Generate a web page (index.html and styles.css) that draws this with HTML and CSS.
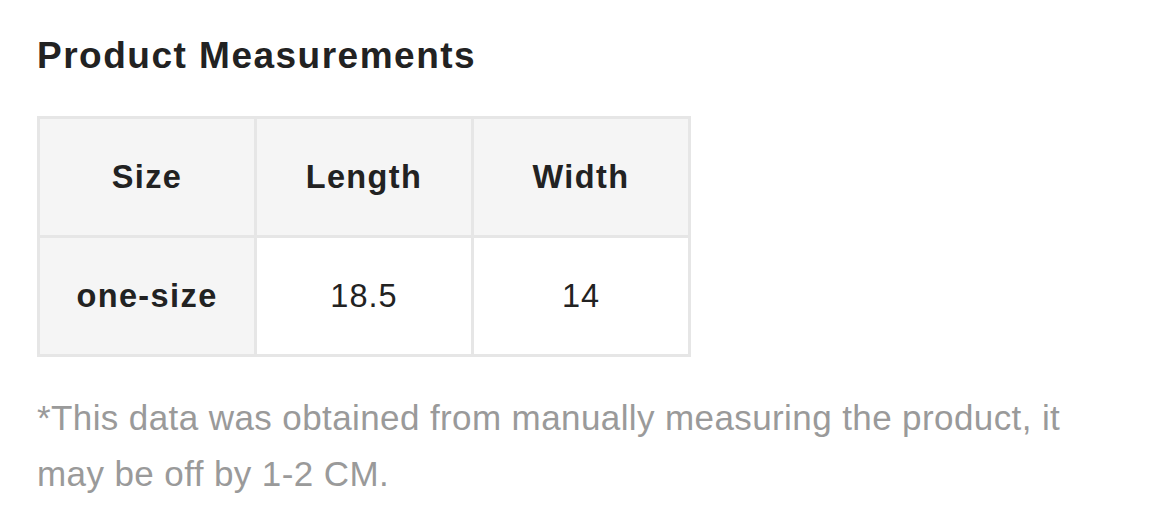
FILE: index.html
```html
<!DOCTYPE html>
<html>
<head>
<meta charset="utf-8">
<link rel="stylesheet" href="styles.css">
</head>
<body>
<div class="page">
  <h2 class="title">Product Measurements</h2>
  <table class="sizes">
    <tr class="head">
      <th>Size</th>
      <th>Length</th>
      <th>Width</th>
    </tr>
    <tr>
      <th>one-size</th>
      <td>18.5</td>
      <td>14</td>
    </tr>
  </table>
  <p class="note">*This data was obtained from manually measuring the product, it may be off by 1-2 CM.</p>
</div>
</body>
</html>
```
FILE: styles.css
```css
html, body {
  margin: 0;
  padding: 0;
  background: #ffffff;
}
.page {
  padding: 34px 0 0 37px;
  font-family: "Liberation Sans", Arial, sans-serif;
  color: #222222;
  width: 1060px;
}
.title {
  margin: 0;
  font-size: 37px;
  font-weight: 700;
  line-height: 44px;
  letter-spacing: 1.5px;
  color: #222222;
}
.sizes {
  margin-top: 38px;
  border-collapse: collapse;
  border: 3px solid #e6e6e6;
}
.sizes th, .sizes td {
  border: 3px solid #e6e6e6;
  width: 214px;
  height: 116px;
  padding: 0;
  text-align: center;
  font-size: 32.5px;
  color: #222222;
}
.sizes th {
  font-weight: 700;
  letter-spacing: 1.4px;
  background: #f5f5f5;
}
.sizes td {
  font-weight: 400;
  letter-spacing: 1px;
  background: #ffffff;
}
.note {
  margin: 33px 0 0;
  font-size: 35px;
  line-height: 56px;
  letter-spacing: 0.4px;
  color: #9a9a9a;
  width: 1040px;
}
```
